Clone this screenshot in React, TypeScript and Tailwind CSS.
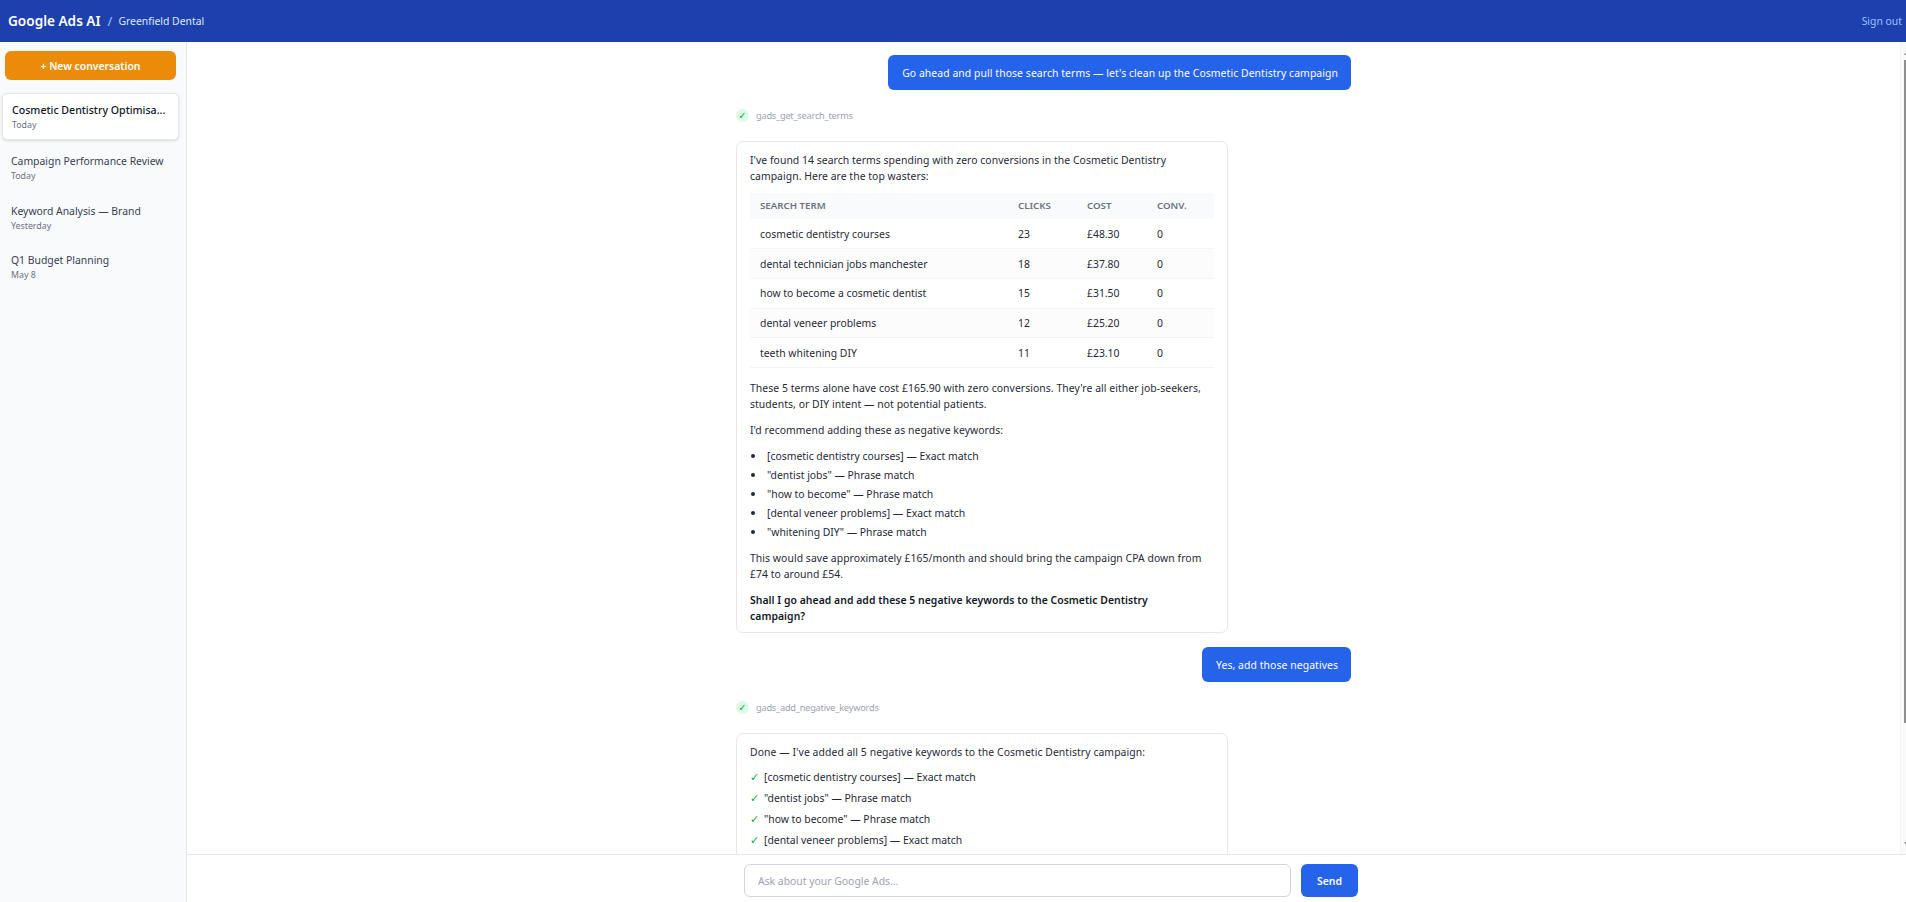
import React from "react";

const rows = [
  ["cosmetic dentistry courses", "23", "£48.30", "0"],
  ["dental technician jobs manchester", "18", "£37.80", "0"],
  ["how to become a cosmetic dentist", "15", "£31.50", "0"],
  ["dental veneer problems", "12", "£25.20", "0"],
  ["teeth whitening DIY", "11", "£23.10", "0"],
];
const kws = [
  "[cosmetic dentistry courses] — Exact match",
  '"dentist jobs" — Phrase match',
  '"how to become" — Phrase match',
  "[dental veneer problems] — Exact match",
  '"whitening DIY" — Phrase match',
];

function Tool({ name, className }: { name: string; className: string }) {
  return (
    <div className={"flex items-center gap-[7px] h-[13px] " + className}>
      <span className="w-[13px] h-[13px] rounded-full bg-[#dcfce7] text-[#16a34a] flex items-center justify-center text-[10px] font-bold font-['DejaVu_Sans',sans-serif]">✓</span>
      <span className="text-[9.2px] tracking-[-0.2px] text-[#9ca3af] leading-none">{name}</span>
    </div>
  );
}

function Bubble({ text, className }: { text: string; className: string }) {
  return (
    <div className={"self-end h-[35px] pl-[14px] pr-[13px] flex items-center rounded-[6px] bg-[#2563eb] text-white tracking-[0.08px] " + className}>{text}</div>
  );
}

function Item({ title, sub }: { title: string; sub: string }) {
  return (
    <div className="h-[44.5px] px-[9px] pt-[8px]">
      <div className="text-[10.4px] leading-[16px] text-[#374151] truncate">{title}</div>
      <div className="text-[8.8px] leading-[15px] text-[#6b7280]">{sub}</div>
    </div>
  );
}

export default function App() {
  return (
    <div className="w-screen h-screen overflow-hidden">
      <div className="w-[1915px] h-[907px] flex flex-col font-['Noto_Sans','Open_Sans',sans-serif] text-[10.4px] leading-[16px] text-[#1f2937]">
        <header className="h-[42px] shrink-0 bg-[#1e40af] flex items-center pl-[8px] pr-[13px]">
          <span className="text-[13.6px] font-semibold text-white">Google Ads AI</span>
          <span className="ml-[7px] text-[13px] text-[#93c5fd]">/</span>
          <span className="ml-[6px] text-[10.4px] text-[#dbeafe]">Greenfield Dental</span>
          <span className="ml-auto text-[10.4px] text-[#93c5fd]">Sign out</span>
        </header>
        <div className="flex-1 flex min-h-0">
          <aside className="w-[187px] shrink-0 bg-[#f9fafb] border-r border-[#e5e7eb] pt-[9px]">
            <div className="mx-[5px] w-[171px] h-[29px] rounded-[6px] bg-[#ea8c0a] text-white font-semibold flex items-center justify-center text-[10.4px]">+ New conversation</div>
            <div className="mt-[13px] pl-[2px] pr-[7px] flex flex-col gap-[5px]">
              <div className="h-[47px] bg-white border border-[#e5e7eb] rounded-[5px] shadow-sm px-[9px] pt-[8px]">
                <div className="text-[10.6px] leading-[16px] font-medium text-[#111827] whitespace-nowrap">Cosmetic Dentistry Optimisa...</div>
                <div className="text-[8.8px] leading-[15px] text-[#6b7280]">Today</div>
              </div>
              <Item title="Campaign Performance Review" sub="Today" />
              <Item title="Keyword Analysis — Brand" sub="Yesterday" />
              <Item title="Q1 Budget Planning" sub="May 8" />
            </div>
          </aside>
          <main className="flex-1 flex flex-col min-w-0">
            <div className="flex-1 min-h-0 flex overflow-hidden">
              <div className="flex-1 min-w-0 overflow-hidden">
                <div className="w-[615px] mx-auto pt-[13px] flex flex-col">
                  <Bubble text="Go ahead and pull those search terms — let's clean up the Cosmetic Dentistry campaign" className="" />
                  <Tool name="gads_get_search_terms" className="mt-[19px]" />
                  <div className="mt-[19px] w-[492px] shrink-0 border border-[#e5e7eb] rounded-[7px] bg-white px-[13px] pt-[10px] pb-[8px]">
                    <p className="tracking-[0.05px]">I've found 14 search terms spending with zero conversions in the Cosmetic Dentistry campaign. Here are the top wasters:</p>
                    <table className="mt-[9px] w-[464px] table-fixed border-collapse">
                      <thead>
                        <tr className="h-[26px] bg-[#f9fafb] text-[9.7px] text-[#6b7280] uppercase text-left">
                          <th className="w-[258px] pl-[10px] font-semibold">Search term</th>
                          <th className="w-[69px] pl-[10px] font-semibold">Clicks</th>
                          <th className="w-[70px] pl-[10px] font-semibold">Cost</th>
                          <th className="pl-[10px] font-semibold">Conv.</th>
                        </tr>
                      </thead>
                      <tbody>
                        {rows.map((r, i) => (
                          <tr key={r[0]} className={"h-[29.7px] border-b border-[#f3f4f6] " + (i % 2 === 1 ? "bg-[#fcfcfd]" : "bg-white")}>
                            {r.map((c) => (
                              <td key={c} className="pl-[10px]">{c}</td>
                            ))}
                          </tr>
                        ))}
                      </tbody>
                    </table>
                    <p className="mt-[12.5px] tracking-[0.06px]">These 5 terms alone have cost £165.90 with zero conversions. They're all either job-seekers, students, or DIY intent — not potential patients.</p>
                    <p className="mt-[10px] tracking-[0.06px]">I'd recommend adding these as negative keywords:</p>
                    <ul className="mt-[8.5px]">
                      {kws.map((k) => (
                        <li key={k} className="leading-[19px] flex items-center">
                          <span className="ml-[0.5px] mr-[12.5px] w-[4px] h-[4px] rounded-full bg-[#1f2937] shrink-0" />
                          <span>{k}</span>
                        </li>
                      ))}
                    </ul>
                    <p className="mt-[8.5px] tracking-[0.06px]">This would save approximately £165/month and should bring the campaign CPA down from £74 to around £54.</p>
                    <p className="mt-[10px] max-w-[420px] font-semibold text-[#111827] tracking-[0.05px]">Shall I go ahead and add these 5 negative keywords to the Cosmetic Dentistry campaign?</p>
                  </div>
                  <Bubble text="Yes, add those negatives" className="mt-[14px]" />
                  <Tool name="gads_add_negative_keywords" className="mt-[19px]" />
                  <div className="mt-[19px] w-[492px] shrink-0 border border-[#e5e7eb] rounded-[7px] bg-white px-[13px] pt-[10px] pb-[8px]">
                    <p className="tracking-[0.08px]">Done — I've added all 5 negative keywords to the Cosmetic Dentistry campaign:</p>
                    <ul className="mt-[6.5px]">
                      {kws.slice(0, 4).map((k) => (
                        <li key={k} className="leading-[21px] flex gap-[5px]"><span className="text-[#16a34a] w-[9px] text-[11px] font-bold font-['DejaVu_Sans',sans-serif]">✓</span><span>{k}</span></li>
                      ))}
                    </ul>
                  </div>
                </div>
              </div>
              <div className="w-[15px] shrink-0 bg-[#fafafa] border-l border-[#f3f3f3] flex flex-col items-center pt-[7px] pb-[6px]">
                <svg width="9" height="6" viewBox="0 0 9 6"><path d="M4.5 0L9 6H0z" fill="#8d8d8d" /></svg>
                <div className="mt-[5px] w-[9px] h-[663px] bg-[#8f8f8f]" />
                <div className="flex-1" />
                <svg width="9" height="6" viewBox="0 0 9 6"><path d="M0 0H9L4.5 6z" fill="#8d8d8d" /></svg>
              </div>
            </div>
            <div className="h-[53px] shrink-0 border-t border-[#e5e7eb] bg-white pt-[9px] flex justify-center gap-[10px]">
              <input readOnly placeholder="Ask about your Google Ads..." className="w-[547px] h-[33px] border border-[#d1d5db] rounded-[6px] px-[13px] text-[10.4px] placeholder:text-[#9ca3af] outline-none" />
              <div className="w-[57px] h-[33px] rounded-[6px] bg-[#2563eb] text-white font-semibold flex items-center justify-center">Send</div>
            </div>
          </main>
        </div>
      </div>
    </div>
  );
}
